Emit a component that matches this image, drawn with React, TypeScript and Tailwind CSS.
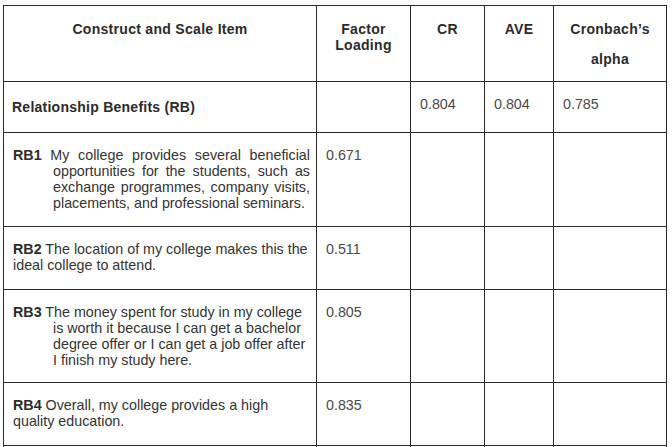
import React from 'react'

interface Item {
  code: string
  text: string
  loading: string
  hang: boolean
  justify: boolean
  height: string
}

const items: Item[] = [
  {
    code: 'RB1',
    text: 'My college provides several beneficial opportunities for the students, such as exchange programmes, company visits, placements, and professional seminars.',
    loading: '0.671',
    hang: true,
    justify: true,
    height: 'h-[94px]',
  },
  {
    code: 'RB2',
    text: 'The location of my college makes this the ideal college to attend.',
    loading: '0.511',
    hang: false,
    justify: false,
    height: 'h-[63px]',
  },
  {
    code: 'RB3',
    text: 'The money spent for study in my college is worth it because I can get a bachelor degree offer or I can get a job offer after I finish my study here.',
    loading: '0.805',
    hang: true,
    justify: false,
    height: 'h-[93px]',
  },
  {
    code: 'RB4',
    text: 'Overall, my college provides a high quality education.',
    loading: '0.835',
    hang: false,
    justify: false,
    height: 'h-[63px]',
  },
]

const cell = 'border border-[#2a2a2a] align-top p-0'
const num = 'pl-[9px] pt-[14px] text-[14.3px] leading-[16px] text-[#4a4a4a]'

export default function App() {
  return (
    <div className="min-h-screen bg-white pl-[3px] pt-[5px] font-['Liberation_Sans',Arial,sans-serif]">
      <table className="table-fixed border-collapse w-[664px]">
        <colgroup>
          <col className="w-[313px]" />
          <col className="w-[94px]" />
          <col className="w-[74px]" />
          <col className="w-[69px]" />
          <col className="w-[113px]" />
        </colgroup>
        <thead>
          {/* Header */}
          <tr className="h-[76px] text-[14px] font-bold text-[#2b2b2b] tracking-[0.3px]">
            <th className={cell}>
              <div className="pt-[15px] leading-[16px] text-center">Construct and Scale Item</div>
            </th>
            <th className={cell}>
              <div className="pt-[15px] leading-[16px] text-center">
                Factor
                <br />
                Loading
              </div>
            </th>
            <th className={cell}>
              <div className="pt-[15px] leading-[16px] text-center">CR</div>
            </th>
            <th className={cell}>
              <div className="pt-[15px] leading-[16px] text-center">AVE</div>
            </th>
            <th className={cell}>
              <div className="pt-[8px] leading-[30px] text-center">
                Cronbach’s
                <br />
                alpha
              </div>
            </th>
          </tr>
        </thead>
        <tbody>
          <tr className="h-[51px]">
            <td className={cell}>
              <div className="pl-[8px] pt-[17px] text-[14px] leading-[16px] font-bold text-[#2b2b2b] tracking-[0.25px]">
                Relationship Benefits (RB)
              </div>
            </td>
            <td className={cell}></td>
            <td className={cell}>
              <div className={num}>0.804</div>
            </td>
            <td className={cell}>
              <div className={num}>0.804</div>
            </td>
            <td className={cell}>
              <div className={num}>0.785</div>
            </td>
          </tr>
          {items.map((it) => (
            <tr key={it.code} className={it.height}>
              <td className={cell}>
                <div
                  className={
                    it.hang
                      ? 'pl-[49px] pr-[6px] pt-[14px] -indent-[40px] text-[14.3px] leading-[16px] text-[#333] ' +
                        (it.justify ? 'text-justify' : 'text-left')
                      : 'pl-[9px] pr-[6px] pt-[14px] text-[14.3px] leading-[16px] text-[#333]'
                  }
                >
                  <b className="text-[#2b2b2b]">{it.code}</b> {it.text}
                </div>
              </td>
              <td className={cell}>
                <div className={num}>{it.loading}</div>
              </td>
              <td className={cell}></td>
              <td className={cell}></td>
              <td className={cell}></td>
            </tr>
          ))}
          <tr className="h-[40px]">
            <td className={cell}></td>
            <td className={cell}></td>
            <td className={cell}></td>
            <td className={cell}></td>
            <td className={cell}></td>
          </tr>
        </tbody>
      </table>
    </div>
  )
}
